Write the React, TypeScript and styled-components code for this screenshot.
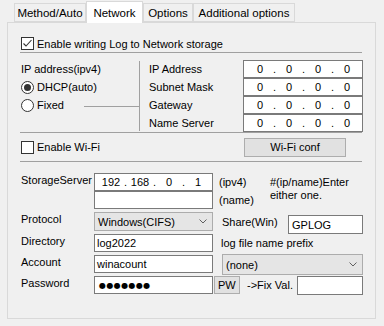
import React from 'react';
import styled, { createGlobalStyle } from 'styled-components';

const Global = createGlobalStyle`
  html, body { margin: 0; padding: 0; background: #f0f0f0; }
  body { font-family: "Liberation Sans", Arial, sans-serif; font-size: 11px; color: #000; }
  * { box-sizing: border-box; }
`;

const Root = styled.div`
  width: 384px;
  height: 326px;
  background: #f0f0f0;
  overflow: hidden;
`;

const TabStrip = styled.div`
  display: flex;
  align-items: flex-end;
  height: 22px;
  padding-left: 14px;
  position: relative;
  z-index: 2;
`;

const Tab = styled.div<{ $active?: boolean; $w: number }>`
  width: ${p => p.$w}px;
  height: ${p => (p.$active ? 22 : 19)}px;
  margin-bottom: ${p => (p.$active ? -1 : 0)}px;
  background: ${p => (p.$active ? '#ffffff' : '#f0f0f0')};
  border: 1px solid #d9d9d9;
  border-bottom: ${p => (p.$active ? 'none' : '1px solid #d9d9d9')};
  display: flex;
  align-items: center;
  justify-content: center;
  white-space: nowrap;
  font-size: 11.5px;
  flex: none;
`;

const Panel = styled.div`
  margin-left: 7px;
  width: 369px;
  height: 297px;
  border: 1px solid #d9d9d9;
  background: #f0f0f0;
  padding: 12px 12px 0 12px;
  position: relative;
  z-index: 1;
`;

const CheckRow = styled.div<{ $h: number; $w?: number }>`
  display: flex;
  align-items: center;
  height: ${p => p.$h}px;
  width: ${p => (p.$w ? `${p.$w}px` : 'auto')};
  padding-left: 1px;
  flex: none;
`;

const CheckBoxBox = styled.span`
  width: 13px;
  height: 13px;
  border: 1px solid #333333;
  background: #ffffff;
  display: inline-flex;
  align-items: center;
  justify-content: center;
  margin-right: 3px;
  flex: none;
`;

const Separator = styled.div<{ $mt?: number }>`
  height: 1px;
  width: 342px;
  background: #a0a0a0;
  margin-top: ${p => p.$mt ?? 0}px;
`;

const IpSection = styled.div`
  display: flex;
  padding-top: 7px;
  height: 79px;
`;

const LeftCol = styled.div`
  width: 119px;
  display: grid;
  grid-auto-rows: 18px;
  flex: none;
`;

const LeftRow = styled.div`
  display: flex;
  align-items: center;
  padding-left: 1px;
`;

const RadioCircle = styled.span<{ $on?: boolean }>`
  width: 13px;
  height: 13px;
  border-radius: 50%;
  border: 1px solid #333333;
  background: #ffffff;
  display: inline-flex;
  align-items: center;
  justify-content: center;
  margin-right: 3px;
  flex: none;
  &::after {
    content: '';
    width: 7px;
    height: 7px;
    border-radius: 50%;
    background: ${p => (p.$on ? '#333333' : 'transparent')};
  }
`;

const GroupLine = styled.span`
  flex: 1;
  height: 1px;
  background: #a0a0a0;
  margin-left: 20px;
  margin-top: 2px;
`;

const VLine = styled.div`
  width: 1px;
  height: 70px;
  margin-top: 1px;
  background: #a0a0a0;
  flex: none;
`;

const RightGrid = styled.div`
  display: grid;
  grid-template-columns: 94px 120px;
  grid-auto-rows: 18px;
  padding-left: 9px;
`;

const GridLabel = styled.div`
  display: flex;
  align-items: center;
  margin-top: -1px;
`;

const IpBox = styled.div<{ $w: number; $h: number }>`
  width: ${p => p.$w}px;
  height: ${p => p.$h}px;
  border: 1px solid #7a7a7a;
  background: #ffffff;
  display: flex;
  align-items: center;
  padding-left: 3px;
  flex: none;
`;

const IpSeg = styled.span`
  width: 26px;
  text-align: center;
`;

const IpDot = styled.span`
  width: 3px;
  text-align: center;
`;

const WifiRow = styled.div`
  display: flex;
  align-items: center;
  height: 28px;
`;

const Button = styled.div<{ $w: number; $h: number; $ml?: number; $left?: boolean }>`
  width: ${p => p.$w}px;
  height: ${p => p.$h}px;
  margin-left: ${p => p.$ml ?? 0}px;
  background: #e1e1e1;
  border: 1px solid #adadad;
  display: flex;
  align-items: center;
  justify-content: ${p => (p.$left ? 'flex-start' : 'center')};
  padding-left: ${p => (p.$left ? 3 : 0)}px;
  flex: none;
`;

const StorageSection = styled.div`
  padding-top: 11px;
`;

const FormRow = styled.div<{ $h: number; $mt?: number }>`
  display: flex;
  align-items: flex-start;
  height: ${p => p.$h}px;
  margin-top: ${p => p.$mt ?? 0}px;
`;

const FieldLabel = styled.div`
  width: 74px;
  flex: none;
  padding-left: 1px;
  line-height: 14px;
`;

const TextBox = styled.div<{ $w: number; $h: number; $mt?: number; $pl?: number }>`
  width: ${p => p.$w}px;
  height: ${p => p.$h}px;
  margin-top: ${p => p.$mt ?? 0}px;
  border: 1px solid #7a7a7a;
  background: #ffffff;
  display: flex;
  align-items: center;
  padding-left: ${p => p.$pl ?? 2}px;
  white-space: nowrap;
  flex: none;
`;

const SelectBox = styled.div<{ $w: number; $h: number; $mt?: number; $ml?: number }>`
  width: ${p => p.$w}px;
  height: ${p => p.$h}px;
  margin-top: ${p => p.$mt ?? 0}px;
  margin-left: ${p => p.$ml ?? 0}px;
  border: 1px solid #acacac;
  background: #e5e5e5;
  display: flex;
  align-items: center;
  justify-content: space-between;
  padding: 0 5px 0 3px;
  flex: none;
`;

const SideText = styled.div<{ $ml: number; $w?: number }>`
  margin-left: ${p => p.$ml}px;
  width: ${p => (p.$w ? `${p.$w}px` : 'auto')};
  align-self: center;
  line-height: 14px;
  white-space: nowrap;
  flex: none;
`;

const Note = styled.div`
  margin-top: 3px;
  line-height: 13px;
  white-space: nowrap;
`;

const Dots = styled.span`
  font-family: "DejaVu Sans", sans-serif;
  font-size: 8px;
  letter-spacing: 0.4px;
  margin-left: 1px;
`;

const Check = () => (
  <svg width="11" height="11" viewBox="0 0 11 11">
    <polyline points="1.5,5.5 4,8 9.5,2" fill="none" stroke="#333" strokeWidth="1.1" />
  </svg>
);

const Chevron = () => (
  <svg width="8" height="5" viewBox="0 0 8 5">
    <polyline points="0.5,0.5 4,4 7.5,0.5" fill="none" stroke="#606060" strokeWidth="1" />
  </svg>
);

const IpField: React.FC<{ parts: string[]; w: number; h: number }> = ({ parts, w, h }) => (
  <IpBox $w={w} $h={h}>
    {parts.map((p, i) => (
      <React.Fragment key={i}>
        <IpSeg>{p}</IpSeg>
        {i < 3 && <IpDot>.</IpDot>}
      </React.Fragment>
    ))}
  </IpBox>
);

export default function App() {
  const zero = ['0', '0', '0', '0'];
  return (
    <Root>
      <Global />
      <TabStrip>
        <Tab $w={72}>Method/Auto</Tab>
        <Tab $w={57} $active>Network</Tab>
        <Tab $w={50}>Options</Tab>
        <Tab $w={102}>Additional options</Tab>
      </TabStrip>
      <Panel>
        <CheckRow $h={17}>
          <CheckBoxBox><Check /></CheckBoxBox>
          Enable writing Log to Network storage
        </CheckRow>
        <Separator />
        <IpSection>
          <LeftCol>
            <LeftRow>IP address(ipv4)</LeftRow>
            <LeftRow><RadioCircle $on />DHCP(auto)</LeftRow>
            <LeftRow><RadioCircle />Fixed<GroupLine /></LeftRow>
          </LeftCol>
          <VLine />
          <RightGrid>
            <GridLabel>IP Address</GridLabel>
            <IpField parts={zero} w={120} h={18} />
            <GridLabel>Subnet Mask</GridLabel>
            <IpField parts={zero} w={120} h={18} />
            <GridLabel>Gateway</GridLabel>
            <IpField parts={zero} w={120} h={18} />
            <GridLabel>Name Server</GridLabel>
            <IpField parts={zero} w={120} h={18} />
          </RightGrid>
        </IpSection>
        <Separator />
        <WifiRow>
          <CheckRow $h={28} $w={224}>
            <CheckBoxBox />
            Enable Wi-Fi
          </CheckRow>
          <Button $w={102} $h={19}>Wi-Fi conf</Button>
        </WifiRow>
        <Separator />
        <StorageSection>
          <FormRow $h={18}>
            <FieldLabel>StorageServer</FieldLabel>
            <IpField parts={['192', '168', '0', '1']} w={119} h={18} />
            <SideText $ml={6} $w={51}>(ipv4)</SideText>
            <Note>#(ip/name)Enter<br />either one.</Note>
          </FormRow>
          <FormRow $h={18}>
            <FieldLabel />
            <TextBox $w={119} $h={18} />
            <SideText $ml={6}>(name)</SideText>
          </FormRow>
          <FormRow $h={19} $mt={3}>
            <FieldLabel>Protocol</FieldLabel>
            <SelectBox $w={119} $h={19}>
              <span>Windows(CIFS)</span>
              <Chevron />
            </SelectBox>
            <SideText $ml={9} $w={66}>Share(Win)</SideText>
            <TextBox $w={75} $h={19} $mt={3} $pl={3}>GPLOG</TextBox>
          </FormRow>
          <FormRow $h={18} $mt={3}>
            <FieldLabel>Directory</FieldLabel>
            <TextBox $w={119} $h={18}>log2022</TextBox>
            <SideText $ml={8}>log file name prefix</SideText>
          </FormRow>
          <FormRow $h={18} $mt={3}>
            <FieldLabel>Account</FieldLabel>
            <TextBox $w={119} $h={18}>winacount</TextBox>
            <SelectBox $w={141} $h={21} $mt={-1} $ml={9}>
              <span>(none)</span>
              <Chevron />
            </SelectBox>
          </FormRow>
          <FormRow $h={18} $mt={3}>
            <FieldLabel>Password</FieldLabel>
            <TextBox $w={119} $h={18} $pl={3}><Dots>●●●●●●●</Dots></TextBox>
            <Button $w={26} $h={18} $ml={1} $left>PW</Button>
            <SideText $ml={7} $w={50}>-&gt;Fix Val.</SideText>
            <TextBox $w={66} $h={19} />
          </FormRow>
        </StorageSection>
      </Panel>
    </Root>
  );
}
